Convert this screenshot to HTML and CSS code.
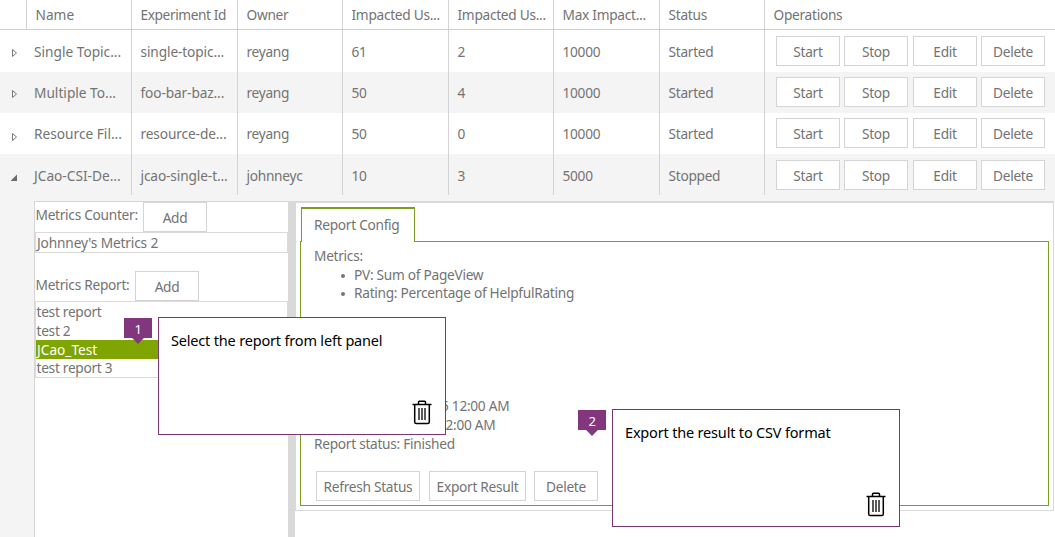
FILE: index.html
```html
<!DOCTYPE html>
<html lang="en">
<head>
<meta charset="utf-8">
<title>Experiments</title>
<link rel="stylesheet" href="styles.css">
</head>
<body>
<main class="app">
  <div class="row head">
    <div class="cell toggle"></div><div class="cell name">Name</div><div class="cell">Experiment Id</div><div class="cell">Owner</div><div class="cell">Impacted Us...</div><div class="cell">Impacted Us...</div><div class="cell">Max Impact...</div><div class="cell">Status</div><div class="cell ops-title">Operations</div>
  </div>
  <div class="row first">
    <div class="cell toggle"><svg class="arrow" viewBox="0 0 8 10"><path d="M1.5 1.5v7l4-3.5z" fill="none" stroke="#777"/></svg></div><div class="cell name">Single Topic...</div><div class="cell">single-topic...</div><div class="cell">reyang</div><div class="cell">61</div><div class="cell">2</div><div class="cell">10000</div><div class="cell">Started</div>
    <div class="cell ops"><button class="btn">Start</button><button class="btn">Stop</button><button class="btn edit">Edit</button><button class="btn">Delete</button></div>
  </div>
  <div class="row alt">
    <div class="cell toggle"><svg class="arrow" viewBox="0 0 8 10"><path d="M1.5 1.5v7l4-3.5z" fill="none" stroke="#777"/></svg></div><div class="cell name">Multiple To...</div><div class="cell">foo-bar-baz...</div><div class="cell">reyang</div><div class="cell">50</div><div class="cell">4</div><div class="cell">10000</div><div class="cell">Started</div>
    <div class="cell ops"><button class="btn">Start</button><button class="btn">Stop</button><button class="btn edit">Edit</button><button class="btn">Delete</button></div>
  </div>
  <div class="row">
    <div class="cell toggle"><svg class="arrow low" viewBox="0 0 8 10"><path d="M1.5 1.5v7l4-3.5z" fill="none" stroke="#777"/></svg></div><div class="cell name">Resource Fil...</div><div class="cell">resource-de...</div><div class="cell">reyang</div><div class="cell">50</div><div class="cell">0</div><div class="cell">10000</div><div class="cell">Started</div>
    <div class="cell ops"><button class="btn">Start</button><button class="btn">Stop</button><button class="btn edit">Edit</button><button class="btn">Delete</button></div>
  </div>
  <div class="row alt open">
    <div class="cell toggle"><svg class="arrow" viewBox="0 0 8 10"><path d="M6 1.5v6.5H-.5z" fill="#6b6b6b"/></svg></div><div class="cell name">JCao-CSI-De...</div><div class="cell">jcao-single-t...</div><div class="cell">johnneyc</div><div class="cell">10</div><div class="cell">3</div><div class="cell">5000</div><div class="cell">Stopped</div>
    <div class="cell ops"><button class="btn">Start</button><button class="btn">Stop</button><button class="btn edit">Edit</button><button class="btn">Delete</button></div>
  </div>
  <section class="detail">
    <aside class="metrics">
      <div class="metric-head counter"><span class="label">Metrics Counter:</span><button class="btn">Add</button></div>
      <ul class="list"><li class="single">Johnney's Metrics 2</li></ul>
      <div class="metric-head report"><span class="label">Metrics Report:</span><button class="btn">Add</button></div>
      <ul class="list reports"><li>test report</li><li>test 2</li><li class="selected">JCao_Test</li><li>test report 3</li></ul>
    </aside>
    <div class="splitter"></div>
    <div class="right">
      <div class="frame">
        <div class="tab">Report Config</div>
        <div class="panel">
          <div class="line">Metrics:</div>
          <ul class="bullets"><li>PV: Sum of PageView</li><li>Rating: Percentage of HelpfulRating</li></ul>
          <div class="dates"><div class="line start">5 12:00 AM</div><div class="line end">12:00 AM</div></div>
          <div class="line status">Report status: Finished</div>
          <div class="actions"><button class="btn refresh">Refresh Status</button><button class="btn export">Export Result</button><button class="btn">Delete</button></div>
        </div>
      </div>
    </div>
  </section>

  <div class="pin one"><span>1</span></div>
  <div class="note one"><p>Select the report from left panel</p>
    <svg class="trash" viewBox="0 0 20 25"><path d="M.5 4.5h19M6.5 4V2.2q0-.9.9-.9h5.2q.9 0 .9.9V4M2.7 5v17q0 1.6 1.6 1.6h11.4q1.6 0 1.6-1.6V5" fill="none" stroke="#000" stroke-width="1.5"/><path d="M7 8v12M10 8v12M13 8v12" stroke="#000" stroke-width="1.3"/></svg>
  </div>
  <div class="pin two"><span>2</span></div>
  <div class="note two"><p>Export the result to CSV format</p>
    <svg class="trash" viewBox="0 0 20 25"><path d="M.5 4.5h19M6.5 4V2.2q0-.9.9-.9h5.2q.9 0 .9.9V4M2.7 5v17q0 1.6 1.6 1.6h11.4q1.6 0 1.6-1.6V5" fill="none" stroke="#000" stroke-width="1.5"/><path d="M7 8v12M10 8v12M13 8v12" stroke="#000" stroke-width="1.3"/></svg>
  </div>
</main>
</body>
</html>
```

FILE: styles.css
```css
* { box-sizing: border-box; }
body { margin: 0; background: #fff; color: #737373; font: 13.7px/18px "Noto Sans", "Open Sans", sans-serif; letter-spacing: -0.28px; }
ul, p { margin: 0; padding: 0; list-style: none; }
.app { position: relative; width: 1055px; height: 537px; overflow: hidden; display: flex; flex-direction: column; }
.row { display: grid; grid-template-columns: 27px 105px 106px 105px 106px 105px 106px 105px 290px; height: 41px; flex: none; }
.row.head { height: 30px; border-bottom: 1px solid #d0d0d0; }
.row.first { height: 42px; }
.alt { background: #f4f4f4; }
.cell { border-right: 1px solid #d3d3d3; padding: 12px 0 0 8.5px; white-space: nowrap; overflow: hidden; }
.first .cell { padding-top: 13px; }
.open .cell { padding-top: 13px; }
.head .cell { padding-top: 6px; }
.row .cell.name { padding-left: 7px; letter-spacing: 0; }
.row .cell:nth-child(3) { letter-spacing: -0.12px; }
.head .cell.name { padding-left: 8.5px; }
.head .cell:nth-child(3) { letter-spacing: -0.4px; }
.row .cell:last-child { border-right: 0; }
.row:not(.head) .toggle { border-right: 0; padding-left: 11px; }
.arrow { display: block; width: 8px; height: 10px; margin-top: 5px; }
.arrow.low { margin-top: 7px; }
.open .arrow { margin-top: 6px; }
.row .ops { display: flex; gap: 4px; padding: 5px 0 0 11px; }
.first .ops, .open .ops { padding-top: 6px; }
.btn { flex: none; width: 64px; height: 30px; border: 1px solid #d4d4d4; background: #fff; padding: 2px 0 0; margin: 0; font: inherit; letter-spacing: inherit; color: inherit; text-align: center; white-space: nowrap; }
.edit { margin-left: 1px; }
.detail { flex: 1; display: grid; grid-template-columns: 254px 7px 760px; background: #f4f4f4; padding: 6px 0 0 34px; }
.metrics { background: #fff; border: 1px solid #d6d6d6; border-right: 0; border-bottom: 0; }
.metric-head { display: flex; height: 30px; }
.label { padding-left: 0.5px; }
.counter .label { width: 108px; padding-top: 4px; }
.report .label { width: 100px; padding-top: 5px; }
.report { margin-top: 18px; }
.list { border: 1px solid #dadada; height: 21px; width: 253px; }
.single { padding: 1px 0 0 1px; letter-spacing: -0.15px; }
.reports { height: 77px; padding-top: 1px; }
.reports li { height: 18.5px; padding-left: 0.5px; line-height: 18px; }
.reports .selected { background: #7fa600; color: #fff; padding-left: 1px; letter-spacing: 0; line-height: 19px; }
.splitter { background: #d9d9d9; }
.right { background: #fff; }
.frame { width: 759px; height: 310px; border: 1px solid #d9d9d9; border-top-width: 2px; padding: 4px 4px 0; }
.tab { position: relative; z-index: 1; width: 114px; height: 35px; margin: 0 0 -1px 1px; border: 1px solid #7a9e1f; border-top: 2px solid #7a9e1f; border-bottom: 0; background: #fff; padding: 7px 0 0 12px; }
.panel { width: 749px; height: 265px; border: 1px solid #7a9e1f; padding: 5px 13px 0; }
.bullets { padding: 1px 0 0 40px; }
.bullets li { height: 18px; display: flex; }
.bullets li::before { content: ""; width: 4px; height: 4px; border-radius: 50%; background: #777; margin: 8px 9px 0 -13px; }
.dates { padding-top: 95px; }
.start { padding-left: 127px; height: 19px; }
.end { padding-left: 124px; height: 19px; }
.actions { display: flex; padding: 18px 0 0 2px; }
.refresh { width: 104px; margin-right: 9px; }
.export { width: 97px; margin-right: 8px; }
.note { position: absolute; z-index: 3; width: 288px; height: 118px; border: 1px solid #7c3670; background: #fff; padding: 13px 12px; color: #000; font-size: 14.5px; letter-spacing: -0.18px; }
.note.one { left: 158px; top: 317px; }
.note.two { left: 612px; top: 409px; }
.trash { position: absolute; right: 13px; bottom: 9px; width: 20px; height: 25px; }
.pin { position: absolute; z-index: 4; width: 28px; height: 26px; padding-top: 2px; text-align: center; color: #fff; font-size: 13px; background: #81367d; clip-path: polygon(0 0, 100% 0, 100% 77%, 71% 77%, 50% 100%, 29% 77%, 0 77%); }
.pin.one { left: 124px; top: 318px; }
.pin.two { left: 578px; top: 410px; }
```
